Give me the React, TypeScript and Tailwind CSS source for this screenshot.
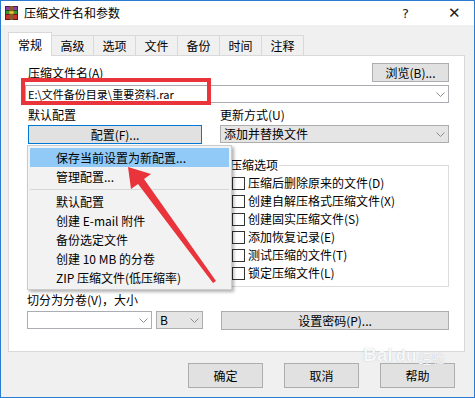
import React from "react";

function Chevron() {
  return (
    <svg width="9" height="5" viewBox="0 0 9 5">
      <path d="M0.5 0.5 L4.5 4.5 L8.5 0.5" fill="none" stroke="#8c8c8c" strokeWidth="1" />
    </svg>
  );
}

function WinRarIcon() {
  return (
    <svg width="13" height="14" viewBox="0 0 13 14">
      <rect x="0.5" y="0.5" width="12" height="4" fill="#8e3fa3" stroke="#4b1d59" strokeWidth="1" />
      <rect x="0.5" y="4.5" width="12" height="4" fill="#2f9a3a" stroke="#18521e" strokeWidth="1" />
      <rect x="0.5" y="8.5" width="12" height="5" fill="#c8352e" stroke="#6a1815" strokeWidth="1" />
      <rect x="5" y="0" width="3" height="14" fill="#8a5a2b" />
      <rect x="4" y="5" width="5" height="3" fill="#f2c230" stroke="#8a6a10" strokeWidth="0.6" />
    </svg>
  );
}

function Check({ label }: { label: string }) {
  return (
    <div className="h-[18px] flex items-center">
      <span className="w-[13px] h-[13px] border border-[#333333] bg-white" />
      <span className="ml-[3px] leading-none">{label}</span>
    </div>
  );
}

export default function App() {
  return (
    <div className="relative w-[475px] h-[398px] overflow-hidden bg-[#f0f0f0] border border-[#2b7bd0] font-['Noto_Sans_CJK_SC',sans-serif] text-[12px] text-black">
      {/* Title bar */}
      <div className="h-[24px] bg-white flex items-center pl-[4px]">
        <WinRarIcon />
        <span className="ml-[6px] text-[12px] leading-none">压缩文件名和参数</span>
        <span className="flex-1" />
        <span className="w-[10px] text-[13px] leading-none font-['DejaVu_Sans',sans-serif] text-[#222]">?</span>
        <span className="ml-[36px] mr-[13px] text-[15px] leading-none font-['DejaVu_Sans',sans-serif] font-light text-[#222]">✕</span>
      </div>

      {/* Body */}
      <div className="pl-[7px] pt-[7px]">
        {/* Tabs */}
        <div className="flex items-end h-[23px] relative z-10">
          <div className="w-[44px] h-[24px] bg-white border border-b-0 border-[#d9d9d9] flex items-center justify-center mb-[-1px]">
            常规
          </div>
          {["高级", "选项", "文件", "备份", "时间", "注释"].map((t) => (
            <div
              key={t}
              className="w-[42px] h-[20px] bg-[#f0f0f0] border border-l-0 border-b-0 border-[#d9d9d9] flex items-center justify-center"
            >
              {t}
            </div>
          ))}
        </div>

        {/* Panel */}
        <div className="w-[457px] h-[297px] bg-white border border-[#d9d9d9] pl-[16px] pr-[15px] flex flex-col">
          {/* Row 1 */}
          <div className="mt-[7px] h-[19px] flex items-center justify-between">
            <span className="ml-[3px] leading-none">压缩文件名(A)</span>
            <div className="w-[77px] h-[19px] bg-[#e1e1e1] border border-[#adadad] flex items-center justify-center leading-none">
              浏览(B)...
            </div>
          </div>
          {/* Filename combo */}
          <div className="mt-[3px] h-[18px] flex items-center bg-white border border-[#abadb3]">
            <span className="flex-1 pl-[2px] text-[11px] leading-none">E:\文件备份目录\重要资料.rar</span>
            <span className="w-[15px] flex justify-center">
              <Chevron />
            </span>
          </div>

          {/* Row 3 */}
          <div className="flex mt-[4px]">
            <div className="ml-[3px] w-[174px] flex flex-col">
              <span className="h-[16px] flex items-center leading-none">默认配置</span>
              <div className="mt-[2px] h-[19px] bg-[#e1e1e1] border border-[#0078d7] flex items-center justify-center leading-none">
                配置(F)...
              </div>
            </div>
            <div className="ml-[18px] flex-1 flex flex-col">
              <span className="h-[16px] flex items-center leading-none">更新方式(U)</span>
              <div className="mt-[2px] h-[18px] bg-[#e5e5e5] border border-[#adadad] flex items-center">
                <span className="flex-1 pl-[3px] leading-none">添加并替换文件</span>
                <span className="w-[15px] flex justify-center">
                  <Chevron />
                </span>
              </div>
            </div>
          </div>

          {/* Group box */}
          <div className="mt-[21px] ml-[198px] h-[122px] relative border border-[#dcdcdc] pt-[8px] pl-[8px]">
            <span className="absolute left-[5px] top-[-9px] px-[1px] bg-white leading-[16px]">压缩选项</span>
            <Check label="压缩后删除原来的文件(D)" />
            <Check label="创建自解压格式压缩文件(X)" />
            <Check label="创建固实压缩文件(S)" />
            <Check label="添加恢复记录(E)" />
            <Check label="测试压缩的文件(T)" />
            <Check label="锁定压缩文件(L)" />
          </div>

          {/* Row 4 */}
          <span className="mt-[5px] ml-[2px] h-[16px] flex items-center leading-none">切分为分卷(V)，大小</span>
          <div className="mt-[3px] flex">
            <div className="ml-[2px] w-[125px] h-[18px] bg-white border border-[#abadb3] flex items-center justify-end">
              <span className="w-[15px] flex justify-center">
                <Chevron />
              </span>
            </div>
            <div className="ml-[4px] w-[47px] h-[18px] bg-[#e5e5e5] border border-[#adadad] flex items-center">
              <span className="flex-1 pl-[3px] leading-none">B</span>
              <span className="w-[15px] flex justify-center">
                <Chevron />
              </span>
            </div>
            <div className="ml-[18px] flex-1 h-[19px] bg-[#e1e1e1] border border-[#adadad] flex items-center justify-center leading-none">
              设置密码(P)...
            </div>
          </div>
        </div>
      </div>

      {/* Bottom buttons */}
      <div className="mt-[11px] flex pl-[187px] gap-[21px]">
        {["确定", "取消", "帮助"].map((b) => (
          <div
            key={b}
            className="w-[75px] h-[25px] bg-[#e1e1e1] border border-[#adadad] flex items-center justify-center leading-none"
          >
            {b}
          </div>
        ))}
      </div>

      {/* Baidu watermark */}
      <div className="absolute left-[362px] top-[344px] flex items-end text-white/90 font-['Liberation_Sans',sans-serif] font-bold text-[19px] leading-none [text-shadow:0_0_1px_rgba(120,130,150,0.6)] pointer-events-none">
        <span>Bai</span>
        <span className="ml-[3px] text-[17px]">du</span>
        <span className="ml-[2px] text-[13px] font-['Noto_Sans_CJK_SC',sans-serif] font-normal">经验</span>
      </div>

      {/* Dropdown menu */}
      <div className="absolute left-[26px] top-[144px] w-[205px] bg-[#f2f2f2] border border-[#cccccc] shadow-[2px_2px_3px_rgba(0,0,0,0.3)] py-[2px]">
        <div className="mx-[2px] h-[19px] bg-[#91c9f7] flex items-center pl-[26px] leading-none">保存当前设置为新配置...</div>
        <div className="mx-[2px] h-[19px] flex items-center pl-[26px] leading-none">管理配置...</div>
        <div className="mx-[2px] h-[6px] flex items-center">
          <div className="h-px w-full bg-[#d7d7d7]" />
        </div>
        <div className="mx-[2px] h-[19px] flex items-center pl-[26px] leading-none">默认配置</div>
        <div className="mx-[2px] h-[19px] flex items-center pl-[26px] leading-none">创建 E-mail 附件</div>
        <div className="mx-[2px] h-[19px] flex items-center pl-[26px] leading-none">备份选定文件</div>
        <div className="mx-[2px] h-[19px] flex items-center pl-[26px] leading-none">创建 10 MB 的分卷</div>
        <div className="mx-[2px] h-[19px] flex items-center pl-[26px] leading-none">ZIP 压缩文件(低压缩率)</div>
      </div>

      {/* Red highlight rectangle */}
      <div className="absolute left-[20px] top-[77px] w-[190px] h-[27px] border-[4px] border-[#e8343a] pointer-events-none" />

      {/* Red arrow */}
      <svg className="absolute left-[-1px] top-[-1px] pointer-events-none" width="475" height="398" viewBox="0 0 475 398">
        <polygon
          points="128,167 151,174 144,179 216,281 213,283 138,184 131,189"
          fill="#e8343a"
        />
      </svg>
    </div>
  );
}
